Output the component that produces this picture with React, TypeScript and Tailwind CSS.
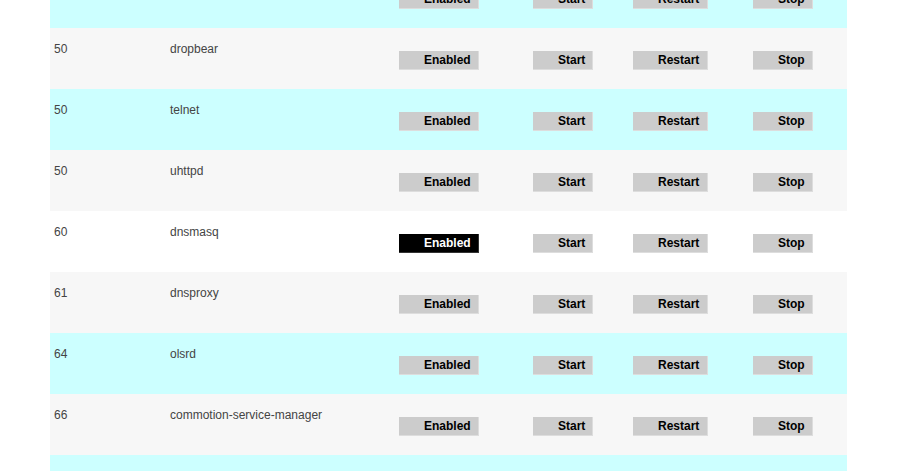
const rows = [
  { num: '', name: '', bg: 'bg-[#ccffff]', active: false },
  { num: '50', name: 'dropbear', bg: 'bg-[#f7f7f7]', active: false },
  { num: '50', name: 'telnet', bg: 'bg-[#ccffff]', active: false },
  { num: '50', name: 'uhttpd', bg: 'bg-[#f7f7f7]', active: false },
  { num: '60', name: 'dnsmasq', bg: 'bg-white', active: true },
  { num: '61', name: 'dnsproxy', bg: 'bg-[#f7f7f7]', active: false },
  { num: '64', name: 'olsrd', bg: 'bg-[#ccffff]', active: false },
  { num: '66', name: 'commotion-service-manager', bg: 'bg-[#f7f7f7]', active: false },
  { num: '', name: '', bg: 'bg-[#ccffff]', active: false },
]

function Btn({ label, width, dark }: { label: string; width: string; dark?: boolean }) {
  return (
    <button
      type="button"
      className={`block ${width} h-[19px] pl-[25px] pt-[1px] text-left text-[12px] font-bold leading-[17px] border-b border-r ${
        dark ? 'bg-black text-white border-[#333]' : 'bg-[#cccccc] text-black border-[#dddddd]'
      }`}
    >
      {label}
    </button>
  )
}

export default function App() {
  return (
    <div className="h-[471px] overflow-hidden bg-white font-['Liberation_Sans',Arial,sans-serif]">
      <div className="ml-[50px] mt-[-33px] w-[797px]">
        {rows.map((r, i) => (
          <div key={i} className={`flex h-[61px] items-start ${r.bg}`}>
            <div className="w-[120px] pl-[4px] pt-[13px] text-[12px] leading-[16px] text-[#444]">{r.num}</div>
            <div className="w-[229px] pt-[13px] text-[12px] leading-[16px] text-[#444]">{r.name}</div>
            <div className="w-[134px] pt-[23px]">
              <Btn label="Enabled" width="w-[80px]" dark={r.active} />
            </div>
            <div className="w-[100px] pt-[23px]">
              <Btn label="Start" width="w-[60px]" />
            </div>
            <div className="w-[120px] pt-[23px]">
              <Btn label="Restart" width="w-[75px]" />
            </div>
            <div className="pt-[23px]">
              <Btn label="Stop" width="w-[60px]" />
            </div>
          </div>
        ))}
      </div>
    </div>
  )
}
